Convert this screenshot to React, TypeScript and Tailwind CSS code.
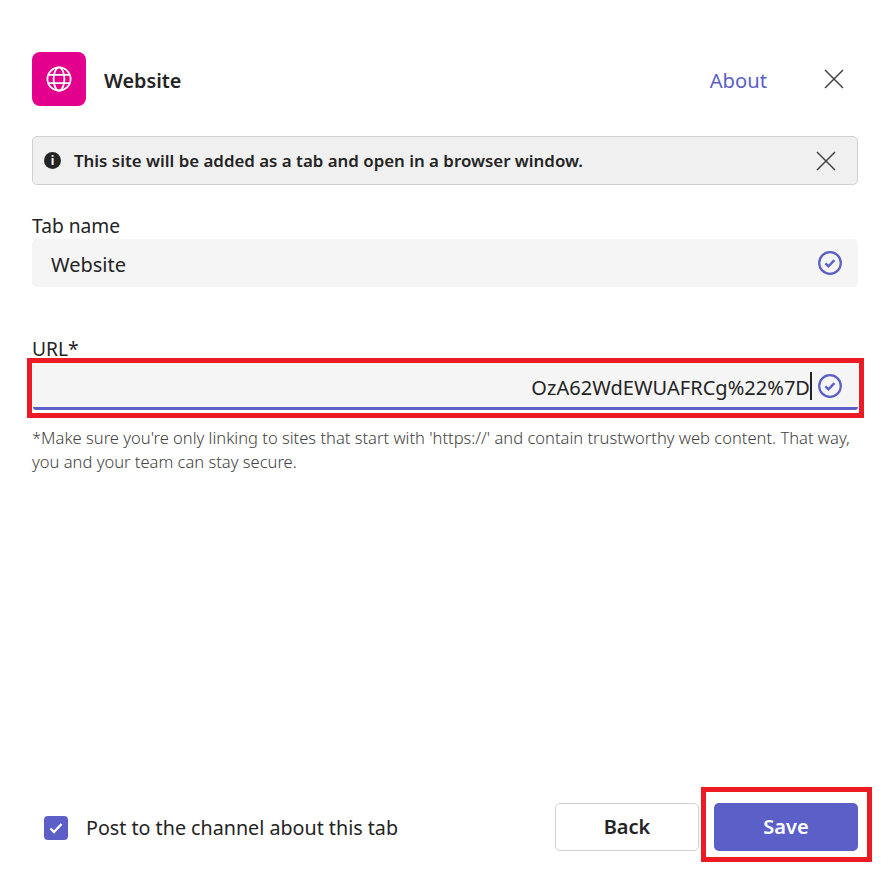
import { useState } from 'react';

const font = { fontFamily: '"Noto Sans", sans-serif' };

function CloseIcon() {
  return (
    <svg width="20" height="20" viewBox="0 0 20 20" fill="none" stroke="#424242" strokeWidth="1.5">
      <path d="M1 1 L19 19 M19 1 L1 19" />
    </svg>
  );
}

function CheckCircle() {
  return (
    <svg width="24" height="24" viewBox="0 0 24 24" fill="none" stroke="#5b5fc7" className="shrink-0 block">
      <circle cx="12" cy="12" r="10.8" strokeWidth="2.2" />
      <path d="M7.4 12.4 L10.5 15.3 L16.4 9.2" strokeWidth="2.4" />
    </svg>
  );
}

function GlobeIcon() {
  return (
    <svg width="26" height="26" viewBox="0 0 26 26" fill="none" stroke="#fff" strokeWidth="1.8">
      <circle cx="13" cy="13" r="11.6" />
      <ellipse cx="13" cy="13" rx="5.4" ry="11.6" />
      <path d="M2.4 8.9 H23.6 M2.4 17.1 H23.6" />
    </svg>
  );
}

export default function App() {
  const [post, setPost] = useState(true);

  return (
    <div className="w-[889px] h-[880px] bg-white pl-[32px] pr-[31px] pt-[52px] text-[#242424] flex flex-col overflow-hidden" style={font}>
      <header className="flex items-center h-[54px]">
        <div className="w-[54px] h-[54px] rounded-lg bg-[#e3008c] flex items-center justify-center">
          <GlobeIcon />
        </div>
        <h1 className="ml-[18px] pt-[3px] text-[19.8px] font-semibold leading-none">Website</h1>
        <a className="ml-auto pt-[3px] text-[20.2px] text-[#5b5fc7] leading-none">About</a>
        <button className="ml-[57px] mr-[14px]">
          <CloseIcon />
        </button>
      </header>

      <div className="mt-[30px] h-[49px] rounded-[5px] border border-[#d1d1d1] bg-[#f0f0f0] flex items-center pl-[11px] pr-[21px]">
        <span className="w-[17px] h-[17px] rounded-full bg-[#242424] text-white flex items-center justify-center text-[12px] font-bold leading-none">i</span>
        <p className="ml-[13px] pt-[1px] text-[16.87px] font-semibold">This site will be added as a tab and open in a browser window.</p>
        <button className="ml-auto">
          <CloseIcon />
        </button>
      </div>

      <label className="mt-[26px] text-[19.2px] leading-[30px] h-[28px]">Tab name</label>
      <div className="h-[48px] rounded-[5px] bg-[#f5f5f5] flex items-center pl-[19px] pr-[16px] text-[20px]">
        <span className="pt-[3px]">Website</span>
        <span className="ml-auto"><CheckCircle /></span>
      </div>

      <label className="mt-[47px] text-[19.2px] leading-[30px] h-[24px]">URL*</label>
      <div className="-ml-[5px] -mr-[6px] border-[5px] border-[#ed1c24] px-[1px] pb-[3px]">
        <div className="h-[47px] bg-[#f5f5f5] border-b-[3px] border-[#5b5fc7] rounded-b-[3px] flex items-center justify-end pt-[2px] pr-[16px] text-[20px]">
          <span className="h-[28px] border-r-2 border-[#242424] leading-[31px] tracking-[0.03px]">OzA62WdEWUAFRCg%22%7D</span>
          <span className="ml-[6px]"><CheckCircle /></span>
        </div>
      </div>

      <p className="mt-[8px] text-[16.56px] leading-[24px] font-light text-[#424242]">
        *Make sure you're only linking to sites that start with 'https://' and contain trustworthy web content. That way, you and your team can stay secure.
      </p>

      <footer className="mt-auto mb-[18px] flex items-end justify-between">
        <label className="flex items-center ml-[12px] mb-[20px]" onClick={() => setPost(!post)}>
          <span className="w-[24px] h-[24px] rounded-[4px] bg-[#5b5fc7] flex items-center justify-center">
            <svg width="14" height="12" viewBox="0 0 14 12" fill="none" stroke="#fff" strokeWidth="2.4">
              <path d="M1.5 6.5 L5 10 L12.5 2" />
            </svg>
          </span>
          <span className="ml-[18px] pt-[1px] text-[19.7px] leading-[28px]">Post to the channel about this tab</span>
        </label>
        <div className="flex items-start">
          <button className="mt-[16px] w-[144px] h-[48px] rounded-[5px] border border-[#d1d1d1] bg-white text-[20px] font-semibold">Back</button>
          <div className="ml-[2px] -mr-[14px] border-[5px] border-[#ed1c24] pl-[8px] pr-[9px] pt-[11px] pb-[6px]">
            <button className="block w-[144px] h-[48px] rounded-[5px] bg-[#5b5fc7] text-white text-[20px] font-semibold">Save</button>
          </div>
        </div>
      </footer>
    </div>
  );
}
